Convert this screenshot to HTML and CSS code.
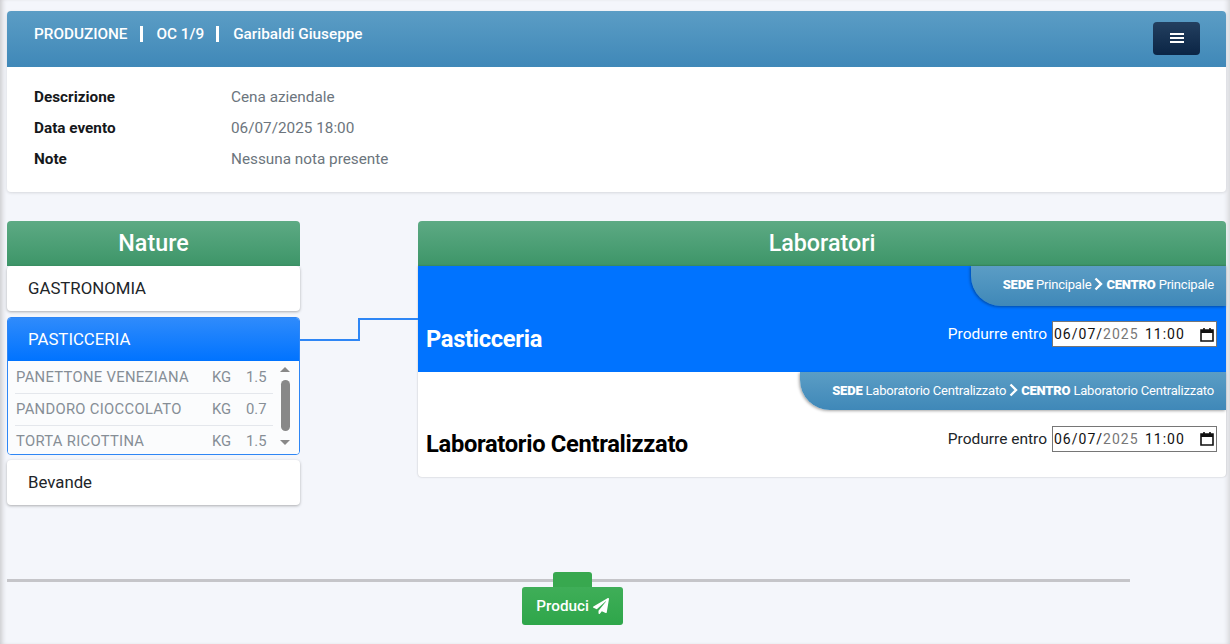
FILE: index.html
```html
<!DOCTYPE html>
<html lang="it">
<head>
<meta charset="UTF-8">
<meta name="viewport" content="width=device-width, initial-scale=1.0">
<title>Produzione</title>
<link rel="stylesheet" href="styles.css">
</head>
<body>

<div class="page">
    <!-- Testata ordine -->
    <div class="card">
        <div class="card-head">
            <div class="crumbs">
                <span>PRODUZIONE</span>
                <i class="sep"></i>
                <span>OC 1/9</span>
                <i class="sep"></i>
                <span>Garibaldi Giuseppe</span>
            </div>
            <button class="menu-btn" aria-label="Menu">
                <span></span><span></span><span></span>
            </button>
        </div>
        <div class="card-body">
            <div class="info-row"><b>Descrizione</b><span>Cena aziendale</span></div>
            <div class="info-row"><b>Data evento</b><span>06/07/2025 18:00</span></div>
            <div class="info-row"><b>Note</b><span>Nessuna nota presente</span></div>
        </div>
    </div>

    <div class="columns">
        <div class="col-nature">
            <div class="col-title">Nature</div>
            <div class="nature">GASTRONOMIA</div>
            <div class="nature-open">
                <div class="nature-head">PASTICCERIA</div>
                <div class="nature-list">
                    <div class="rows">
                        <div class="row"><span class="row-name">PANETTONE VENEZIANA</span><span class="row-um">KG</span><span class="row-qty">1.5</span></div>
                        <div class="row"><span class="row-name">PANDORO CIOCCOLATO</span><span class="row-um">KG</span><span class="row-qty">0.7</span></div>
                        <div class="row"><span class="row-name">TORTA RICOTTINA</span><span class="row-um">KG</span><span class="row-qty">1.5</span></div>
                    </div>
                    <div class="scrollbar">
                        <i class="arrow-up"></i>
                        <i class="thumb"></i>
                        <i class="arrow-down"></i>
                    </div>
                </div>
            </div>
            <div class="nature">Bevande</div>
        </div>

        <!-- Collegamento tra natura e laboratorio -->
        <svg class="connector" width="118" height="24" viewBox="0 0 118 24">
            <polyline points="0,22 59,22 59,1 118,1" fill="none" stroke="#2e86f5" stroke-width="2"/>
        </svg>

        <div class="col-lab">
            <div class="col-title">Laboratori</div>
            <div class="lab-box">
                <div class="lab lab-active">
                    <div class="lab-tag">
                        <b>SEDE</b> Principale
                        <svg class="chev" width="9" height="14" viewBox="0 0 9 14"><polyline points="1.5,1.5 7,7 1.5,12.5" fill="none" stroke="#fff" stroke-width="2.4"/></svg>
                        <b>CENTRO</b> Principale
                    </div>
                    <div class="lab-main">
                        <div class="lab-name">Pasticceria</div>
                        <div class="lab-date">
                            <label>Produrre entro</label>
                            <div class="date-input">
                                <span>06/07/<em>2025</em> 11:00</span>
                                <svg width="14" height="15" viewBox="0 0 14 15"><path d="M1 3h12v11H1z" fill="none" stroke="#111" stroke-width="1.6"/><path d="M1 3h12v3H1z" fill="#111"/><path d="M4 1v2M10 1v2" stroke="#111" stroke-width="1.6"/></svg>
                            </div>
                        </div>
                    </div>
                </div>
                <div class="lab">
                    <div class="lab-tag">
                        <b>SEDE</b> Laboratorio Centralizzato
                        <svg class="chev" width="9" height="14" viewBox="0 0 9 14"><polyline points="1.5,1.5 7,7 1.5,12.5" fill="none" stroke="#fff" stroke-width="2.4"/></svg>
                        <b>CENTRO</b> Laboratorio Centralizzato
                    </div>
                    <div class="lab-main">
                        <div class="lab-name">Laboratorio Centralizzato</div>
                        <div class="lab-date">
                            <label>Produrre entro</label>
                            <div class="date-input">
                                <span>06/07/<em>2025</em> 11:00</span>
                                <svg width="14" height="15" viewBox="0 0 14 15"><path d="M1 3h12v11H1z" fill="none" stroke="#111" stroke-width="1.6"/><path d="M1 3h12v3H1z" fill="#111"/><path d="M4 1v2M10 1v2" stroke="#111" stroke-width="1.6"/></svg>
                            </div>
                        </div>
                    </div>
                </div>
            </div>
        </div>
    </div>

    <div class="footer">
        <div class="footer-line"></div>
        <div class="footer-tab"></div>
        <button class="produce-btn">Produci
            <svg width="16" height="16" viewBox="0 0 512 512"><path fill="#fff" d="M476 3.2L12.5 270.6c-18.1 10.4-15.8 35.6 2.2 43.2L121 358.4l287.3-253.2c5.5-4.9 13.3 2.6 8.6 8.3L176 407v80.5c0 23.6 28.5 32.9 42.5 15.8L282 426l124.6 52.2c14.2 6 30.4-2.9 33-18.2l72-432C515 7.8 493.3-6.8 476 3.2z"/></svg>
        </button>
    </div>
</div>

</body>
</html>
```

FILE: styles.css
```css
body, html {
    margin: 0;
    padding: 0;
    height: 100%;
    width: 100%;
    overflow: hidden;
}

body {
    background-color: #f4f6fb;
    font-family: Roboto, "Liberation Sans", sans-serif;
    color: #212529;
}

.page {
    height: 644px;
    box-sizing: border-box;
    padding: 11px 4px 0 7px;
    box-shadow: inset 5px 0 5px -3px #c9c9cc, inset -5px 0 5px -3px #d5d5d8;
}

/* Testata */
.card {
    background-color: #fff;
    border-radius: 4px;
    box-shadow: 0 1px 3px rgba(0, 0, 0, 0.12);
    height: 181px;
}

.card-head {
    display: flex;
    justify-content: space-between;
    align-items: center;
    height: 56px;
    box-sizing: border-box;
    padding: 0 26px 0 27px;
    border-radius: 4px 4px 0 0;
    background-image: linear-gradient(#5b9dc5, #3f88b8);
    color: #fff;
}

.crumbs {
    display: flex;
    align-items: center;
    font-size: 15.3px;
    font-weight: 500;
    margin-top: -10px;
}

.sep {
    display: block;
    width: 3px;
    height: 16px;
    margin: 0 14px 0 12px;
    background-color: #fff;
}

.menu-btn {
    display: flex;
    flex-direction: column;
    justify-content: center;
    align-items: center;
    gap: 2px;
    width: 47px;
    height: 33px;
    margin-top: -1px;
    padding: 0 0 2px;
    border: none;
    border-radius: 4px;
    background-image: linear-gradient(#233f5f, #0b2545);
}

.menu-btn span {
    display: block;
    width: 14px;
    height: 2px;
    background-color: #fff;
}

.card-body {
    padding: 14px 27px;
    font-size: 15.3px;
}

.info-row {
    display: flex;
    height: 31px;
    align-items: center;
}

.info-row b {
    width: 197px;
    font-weight: 700;
    color: #16181b;
}

.info-row span {
    color: #6c757d;
}

/* Colonne */
.columns {
    position: relative;
    display: flex;
    gap: 118px;
    margin-top: 29px;
}

.col-nature {
    width: 293px;
}

.col-lab {
    flex: 1;
}

.col-title {
    height: 45px;
    line-height: 45px;
    text-align: center;
    color: #fff;
    font-size: 23.3px;
    font-weight: 500;
    border-radius: 4px 4px 0 0;
    background-image: linear-gradient(#5daa84, #3d9568);
}

.nature {
    height: 45px;
    line-height: 45px;
    box-sizing: border-box;
    padding-left: 21px;
    background-color: #fff;
    font-size: 16.8px;
    border-radius: 4px;
    box-shadow: 0 1px 3px rgba(0, 0, 0, 0.3);
}

.nature-open {
    margin: 6px 0 5px;
    height: 138px;
    box-sizing: border-box;
    background-color: #fff;
    border: 1px solid #2e86f5;
    border-radius: 4px;
    overflow: hidden;
}

.nature-head {
    height: 43px;
    line-height: 43px;
    padding-left: 20px;
    color: #fff;
    font-size: 16.8px;
    background-image: linear-gradient(#2f8bfb, #0073ff);
}

.nature-list {
    display: flex;
    height: 93px;
    overflow: hidden;
    background-color: #fbfcfd;
}

.rows {
    width: 258px;
    margin-left: 7px;
    padding-top: 1px;
    font-size: 14.8px;
    color: #868e96;
}

.row {
    display: flex;
    height: 31px;
    line-height: 31px;
    border-bottom: 1px solid #e4e7ec;
    padding-left: 1px;
    box-sizing: content-box;
}

.row:last-child {
    border-bottom: none;
}

.row-name {
    width: 196px;
    letter-spacing: 0.3px;
}

.row-um {
    width: 34px;
}

.scrollbar {
    display: flex;
    flex-direction: column;
    align-items: center;
    width: 16px;
    margin-left: 4px;
    padding-top: 6px;
}

.arrow-up {
    border: 5px solid transparent;
    border-top: none;
    border-bottom: 5px solid #888;
}

.arrow-down {
    border: 5px solid transparent;
    border-bottom: none;
    border-top: 5px solid #888;
    margin-top: 9px;
}

.thumb {
    width: 9px;
    height: 51px;
    margin-top: 8px;
    border-radius: 5px;
    background-color: #888;
}

.connector {
    position: absolute;
    left: 293px;
    top: 97px;
}

/* Laboratori */
.lab-box {
    background-color: #fff;
    border-radius: 0 0 4px 4px;
    box-shadow: 0 0 2px rgba(0, 0, 0, 0.25);
}

.lab {
    height: 105px;
    display: flex;
    flex-direction: column;
    align-items: flex-end;
}

.lab-active {
    background-color: #0073ff;
    color: #fff;
    height: 106px;
}

.lab-tag {
    height: 38px;
    line-height: 38px;
    box-sizing: border-box;
    padding: 0 12px 0 32px;
    color: #fff;
    font-size: 13px;
    letter-spacing: -0.2px;
    white-space: nowrap;
    border-radius: 0 0 0 30px;
    background-image: linear-gradient(#5b9dc5, #3f88b8);
    box-shadow: -1px 1px 3px rgba(0, 0, 0, 0.35);
}

.lab-active .lab-tag {
    height: 40px;
}

.lab-tag b {
    font-weight: 900;
}

.chev {
    vertical-align: -2px;
}

.lab-main {
    align-self: stretch;
    display: flex;
    flex: 1;
    justify-content: space-between;
    align-items: center;
    padding: 0 9px 0 8px;
}

.lab-name {
    font-size: 23.7px;
    font-weight: 700;
    letter-spacing: -0.3px;
    color: #000;
}

.lab-active .lab-name {
    color: #fff;
}

.lab-date {
    display: flex;
    align-items: center;
    gap: 5px;
    font-size: 15.5px;
    margin-top: -10px;
}

.date-input {
    display: flex;
    justify-content: space-between;
    align-items: center;
    width: 165px;
    height: 26px;
    box-sizing: border-box;
    padding: 0 2px 0 1px;
    background-color: #fff;
    border: 1px solid #767676;
    color: #111;
    font-size: 14px;
    letter-spacing: 1px;
    word-spacing: 2px;
}

.date-input em {
    font-style: normal;
    color: #777;
}

/* Barra in basso */
.footer {
    position: relative;
    margin-top: 74px;
    height: 4px;
    width: 1123px;
}

.footer-line {
    height: 3px;
    background-color: #c5c5c9;
}

.footer-tab {
    position: absolute;
    left: 546px;
    top: -7px;
    width: 39px;
    height: 16px;
    border-radius: 3px 3px 0 0;
    background-color: #38a84f;
}

.produce-btn {
    position: absolute;
    left: 515px;
    top: 8px;
    width: 101px;
    height: 38px;
    border: none;
    border-radius: 3px;
    color: #fff;
    font-family: inherit;
    font-size: 15.3px;
    font-weight: 500;
    background-image: linear-gradient(#3fae58, #2ea64a);
}

.produce-btn svg {
    vertical-align: -3px;
}
```
